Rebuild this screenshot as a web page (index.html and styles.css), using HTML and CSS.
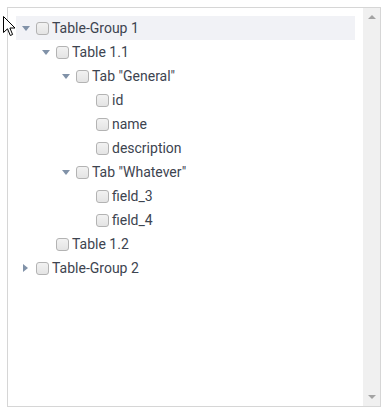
FILE: index.html
```html
<!DOCTYPE html>
<html lang="en">
<head>
    <meta charset="UTF-8">
    <title>Tree</title>
    <link rel="stylesheet" href="styles.css">
</head>
<body>
    <div class="tree-box">
        <ul class="tree-list">
            <li class="node selected"><span class="toggle open"></span><span class="check"></span><span class="label">Table-Group 1</span></li>
            <li class="node lvl-2"><span class="toggle open"></span><span class="check"></span><span class="label">Table 1.1</span></li>
            <li class="node lvl-3"><span class="toggle open"></span><span class="check"></span><span class="label">Tab "General"</span></li>
            <li class="node lvl-4"><span class="toggle"></span><span class="check"></span><span class="label">id</span></li>
            <li class="node lvl-4"><span class="toggle"></span><span class="check"></span><span class="label">name</span></li>
            <li class="node lvl-4"><span class="toggle"></span><span class="check"></span><span class="label">description</span></li>
            <li class="node lvl-3"><span class="toggle open"></span><span class="check"></span><span class="label">Tab "Whatever"</span></li>
            <li class="node lvl-4"><span class="toggle"></span><span class="check"></span><span class="label">field_3</span></li>
            <li class="node lvl-4"><span class="toggle"></span><span class="check"></span><span class="label">field_4</span></li>
            <li class="node lvl-2"><span class="toggle"></span><span class="check"></span><span class="label">Table 1.2</span></li>
            <li class="node"><span class="toggle closed"></span><span class="check"></span><span class="label">Table-Group 2</span></li>
        </ul>
        <div class="scrollbar">
            <span class="arrow up"></span>
            <span class="arrow down"></span>
        </div>
    </div>

    <!-- mouse pointer on top of the box -->
    <svg class="cursor" width="13" height="21" viewBox="0 0 13 21">
        <path d="M0.5 0.5 L0.5 16.5 L4.5 12.8 L7.3 19.5 L9.6 18.5 L6.9 12 L12 12 Z" fill="#fff" stroke="#000" stroke-width="1"/>
    </svg>
</body>
</html>
```

FILE: styles.css
```css
body {
    margin: 0;
    background: #fff;
    font-family: Roboto, "Liberation Sans", sans-serif;
    font-size: 14px;
    color: #3d4450;
}
.tree-box {
    display: flex;
    width: 372px;
    height: 398px;
    margin: 7px 0 0 7px;
    border: 1px solid #d6d6d6;
}
.tree-list {
    flex: 1;
    list-style: none;
    margin: 0;
    padding: 8px 8px 0 8px;
}
.node {
    display: flex;
    align-items: center;
    height: 24px;
}
.node.selected {
    background: #f1f2f6;
}
.lvl-2 { padding-left: 20px; }
.lvl-3 { padding-left: 40px; }
.lvl-4 { padding-left: 60px; }
.toggle {
    width: 20px;
    height: 24px;
    display: flex;
    align-items: center;
    justify-content: center;
}
.toggle.open::before {
    content: "";
    margin-top: 1px;
    border-left: 4.5px solid transparent;
    border-right: 4.5px solid transparent;
    border-top: 5px solid #8192a8;
}
.toggle.closed::before {
    content: "";
    margin-left: -1px;
    border-top: 4.5px solid transparent;
    border-bottom: 4.5px solid transparent;
    border-left: 5px solid #8192a8;
}
.check {
    width: 11px;
    height: 11px;
    border: 1px solid #b3b3b3;
    border-radius: 3px;
    background: linear-gradient(#f2f2f2, #e4e4e4);
    margin-right: 3px;
}
.label {
    white-space: nowrap;
}
.scrollbar {
    width: 17px;
    background: #f0f0f0;
    display: flex;
    flex-direction: column;
    justify-content: space-between;
    align-items: center;
    padding: 7px 0;
}
.arrow {
    border-left: 4px solid transparent;
    border-right: 4px solid transparent;
}
.arrow.up {
    border-bottom: 4px solid #a3a3a3;
}
.arrow.down {
    border-top: 4px solid #a3a3a3;
}
.cursor {
    position: absolute;
    left: 3px;
    top: 16px;
}
```
